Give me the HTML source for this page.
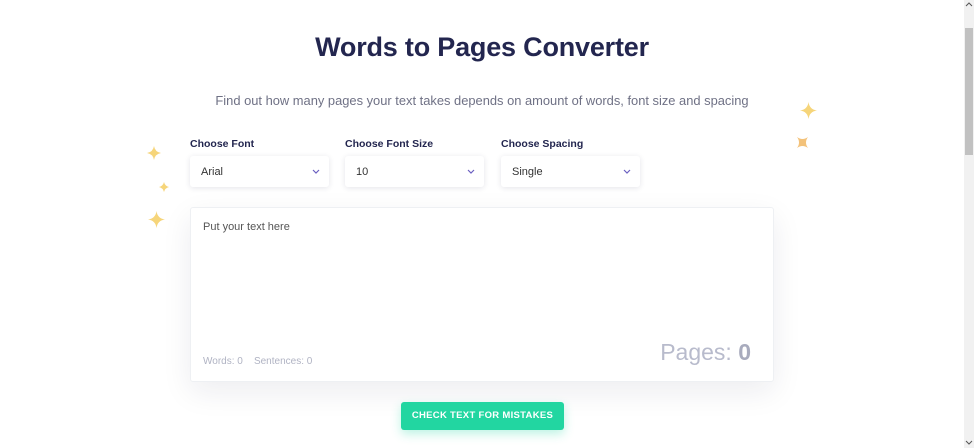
<!DOCTYPE html>
<html><head><meta charset="utf-8"><style>
*{box-sizing:border-box;margin:0;padding:0}
body{width:974px;height:448px;overflow:hidden;background:#fff;font-family:"Liberation Sans",sans-serif;position:relative}
h1{position:absolute;left:0;width:964px;top:32px;text-align:center;font-size:27px;font-weight:bold;color:#23264f;letter-spacing:-0.2px}
.sub{position:absolute;left:0;width:964px;top:93px;text-align:center;font-size:12.9px;color:#6f7185}
.lbl{position:absolute;top:138px;font-size:10.5px;font-weight:bold;color:#23264f}
.sel{position:absolute;top:156px;width:139px;height:31px;background:#fff;border-radius:3px;box-shadow:0 1px 6px rgba(30,30,70,.12);font-size:11px;color:#333;padding:10px 0 0 11px}
.sel svg{position:absolute;right:9px;top:13px}
.ta{position:absolute;left:190px;top:207px;width:584px;height:175px;background:#fff;border-radius:3px;border:1px solid #eef0f3;box-shadow:0 10px 30px rgba(30,30,70,.08)}
.ph{position:absolute;left:12px;top:13px;font-size:11px;color:#555}
.cnt{position:absolute;left:12px;top:148px;font-size:10px;color:#b0b3c3}
.pg{position:absolute;right:22px;top:131px;font-size:23px;color:#b8bbcc}
.pg b{color:#a8abbd}
.btn{position:absolute;left:401px;top:402px;width:163px;height:28px;background:#22d6a1;border-radius:3px;color:#fff;font-size:9.5px;font-weight:bold;letter-spacing:.3px;text-align:center;line-height:28px;box-shadow:0 4px 10px rgba(34,214,161,.3)}
.sb{position:absolute;right:0;top:0;width:10px;height:448px;background:#f1f1f1}
.sb div{position:absolute;left:1px;top:28px;width:8px;height:127px;background:#c1c1c1}
.star{position:absolute}
</style></head><body>
<h1>Words to Pages Converter</h1>
<div class="sub">Find out how many pages your text takes depends on amount of words, font size and spacing</div>
<div class="lbl" style="left:190px">Choose Font</div>
<div class="lbl" style="left:345px">Choose Font Size</div>
<div class="lbl" style="left:501px">Choose Spacing</div>
<div class="sel" style="left:190px">Arial<svg width="8" height="5"><path d="M1 1l3 3 3-3" stroke="#6a5fc0" fill="none" stroke-width="1.2"/></svg></div>
<div class="sel" style="left:345px">10<svg width="8" height="5"><path d="M1 1l3 3 3-3" stroke="#6a5fc0" fill="none" stroke-width="1.2"/></svg></div>
<div class="sel" style="left:501px">Single<svg width="8" height="5"><path d="M1 1l3 3 3-3" stroke="#6a5fc0" fill="none" stroke-width="1.2"/></svg></div>
<div class="ta"><div class="ph">Put your text here</div><div class="cnt">Words: 0 &nbsp;&nbsp; Sentences: 0</div><div class="pg">Pages: <b>0</b></div></div>
<div class="btn">CHECK TEXT FOR MISTAKES</div>
<svg class="star" style="left:147px;top:146px" width="14" height="14"><path d="M7 0Q8 6 14 7Q8 8 7 14Q6 8 0 7Q6 6 7 0Z" fill="#f6d57a"/></svg>
<svg class="star" style="left:159px;top:182px" width="10" height="10"><path d="M5 0Q6 4 10 5Q6 6 5 10Q4 6 0 5Q4 4 5 0Z" fill="#f6d57a"/></svg>
<svg class="star" style="left:148px;top:211px" width="17" height="17"><path d="M8.5 0Q9.5 7.5 17 8.5Q9.5 9.5 8.5 17Q7.5 9.5 0 8.5Q7.5 7.5 8.5 0Z" fill="#f6d57a"/></svg>
<svg class="star" style="left:800px;top:102px" width="17" height="17"><path d="M8.5 0Q9.5 7.5 17 8.5Q9.5 9.5 8.5 17Q7.5 9.5 0 8.5Q7.5 7.5 8.5 0Z" fill="#f6d57a"/></svg>
<svg class="star" style="left:797px;top:137px" width="11" height="11"><path d="M0 0Q5.5 4 11 0Q7 5.5 11 11Q5.5 7 0 11Q4 5.5 0 0Z" fill="#f3c27a"/></svg>
<div class="sb"><div></div></div>
<svg style="position:absolute;right:1px;top:1px" width="8" height="6"><path d="M1 5l3-3 3 3" stroke="#555" fill="none"/></svg>
<svg style="position:absolute;right:1px;top:440px" width="8" height="6"><path d="M1 1l3 3 3-3" stroke="#555" fill="none"/></svg>
</body></html>
